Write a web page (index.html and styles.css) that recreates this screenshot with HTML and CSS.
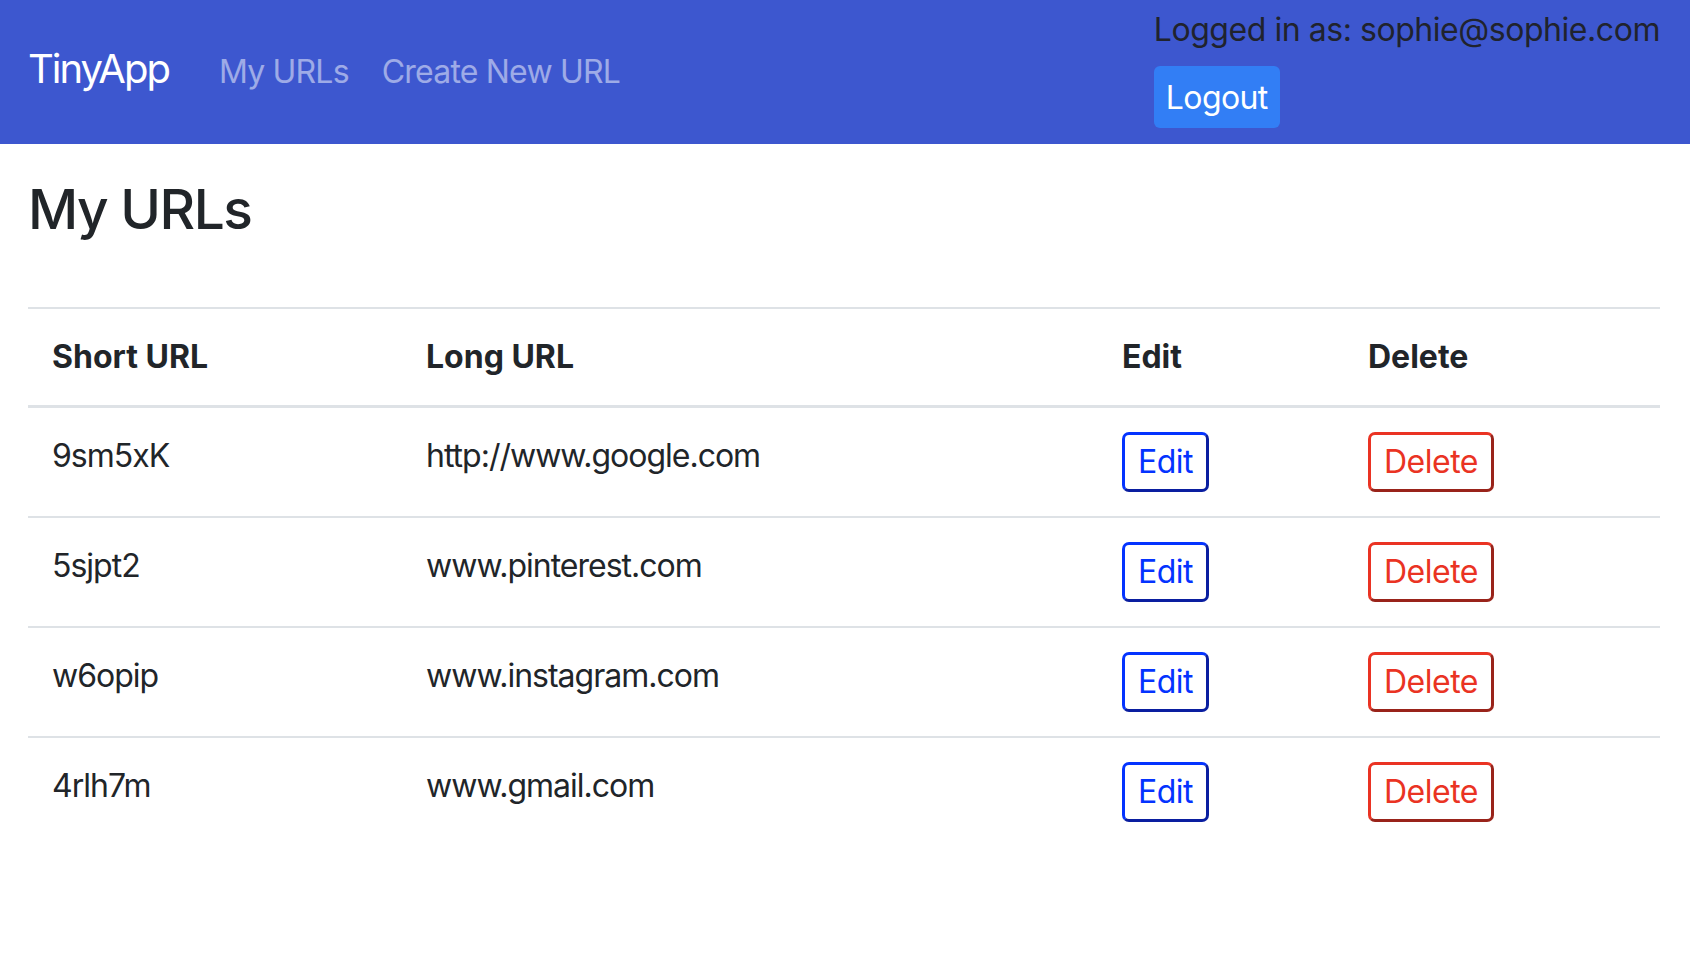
FILE: index.html
```html
<!DOCTYPE html>
<html lang="en">
<head>
<meta charset="utf-8">
<title>TinyApp</title>
<link rel="stylesheet" href="styles.css">
</head>
<body>
<nav class="navbar">
  <div class="nav-left">
    <a class="brand" href="#">TinyApp</a>
    <a class="nav-link" href="#">My URLs</a>
    <a class="nav-link" href="#">Create New URL</a>
  </div>
  <div class="nav-right">
    <div class="logged">Logged in as: sophie@sophie.com</div>
    <button class="btn-logout">Logout</button>
  </div>
</nav>
<main class="container">
  <h1 class="title">My URLs</h1>
  <table class="urls">
    <colgroup>
      <col class="c1"><col class="c2"><col class="c3"><col class="c4">
    </colgroup>
    <thead>
      <tr><th>Short URL</th><th>Long URL</th><th>Edit</th><th>Delete</th></tr>
    </thead>
    <tbody>
      <tr><td>9sm5xK</td><td>http://www.google.com</td><td><button class="btn-edit">Edit</button></td><td><button class="btn-del">Delete</button></td></tr>
      <tr><td>5sjpt2</td><td>www.pinterest.com</td><td><button class="btn-edit">Edit</button></td><td><button class="btn-del">Delete</button></td></tr>
      <tr><td>w6opip</td><td>www.instagram.com</td><td><button class="btn-edit">Edit</button></td><td><button class="btn-del">Delete</button></td></tr>
      <tr><td>4rlh7m</td><td>www.gmail.com</td><td><button class="btn-edit">Edit</button></td><td><button class="btn-del">Delete</button></td></tr>
    </tbody>
  </table>
</main>
</body>
</html>
```

FILE: styles.css
```css
* { box-sizing: border-box; }
html, body { margin: 0; padding: 0; }
body {
  font-family: Inter, "Noto Sans", "Liberation Sans", sans-serif;
  font-size: 32px;
  line-height: 1.5;
  color: #212529;
  background: #fff;
}
.navbar {
  background: #3d57cf;
  height: 144px;
  padding: 6px 30px 16px 28px;
  display: flex;
  justify-content: space-between;
  align-items: flex-start;
}
.nav-left {
  display: flex;
  align-items: baseline;
  margin-top: 33px;
}
.brand {
  font-size: 40px;
  line-height: 60px;
  color: #fff;
  text-decoration: none;
  margin-right: 34px;
  letter-spacing: -2px;
}
.nav-link {
  font-size: 32px;
  line-height: 48px;
  color: rgba(255,255,255,0.5);
  text-decoration: none;
  padding: 0 16px;
  letter-spacing: -0.8px;
}
.nav-link + .nav-link { padding-left: 17px; }
.nav-right {
  display: flex;
  flex-direction: column;
  align-items: flex-start;
}
.logged {
  font-size: 32px;
  line-height: 48px;
  color: #20232d;
  margin-bottom: 12px;
  letter-spacing: -0.45px;
}
.btn-logout {
  font-family: inherit;
  font-size: 32px;
  line-height: 38px;
  color: #fff;
  background: #327ef5;
  border: 0;
  border-radius: 6px;
  padding: 13px 12px 11px;
  letter-spacing: -0.6px;
}
.container {
  padding: 0 30px 0 28px;
}
.title {
  font-size: 55px;
  font-weight: 500;
  line-height: 66px;
  margin: 32px 0 65px;
  letter-spacing: -1.5px;
}
.urls {
  width: 100%;
  table-layout: fixed;
  border-collapse: separate;
  border-spacing: 0;
}
.c1 { width: 374px; }
.c2 { width: 696px; }
.c3 { width: 246px; }
.c4 { width: 316px; }
.urls th, .urls td {
  padding: 24px;
  text-align: left;
  vertical-align: top;
  line-height: 48px;
}
.urls td { letter-spacing: -1px; }
.urls th {
  font-weight: 700;
  border-top: 2px solid #dee2e6;
  border-bottom: 3px solid #dee2e6;
}
.urls tbody tr:not(:last-child) td {
  border-bottom: 2px solid #dee2e6;
}
.btn-edit, .btn-del {
  font-family: inherit;
  font-size: 32px;
  line-height: 38px;
  padding: 8px 13px;
  background: #fff;
  border-radius: 7px;
  border-width: 3px;
  border-style: solid;
  display: block;
  letter-spacing: -0.5px;
}
.btn-edit {
  color: #0433ff;
  border-color: #0433ff #0a1ea0 #0a1ea0 #0433ff;
}
.btn-del {
  color: #ea3323;
  border-color: #ea3323 #99231a #99231a #ea3323;
}
```
